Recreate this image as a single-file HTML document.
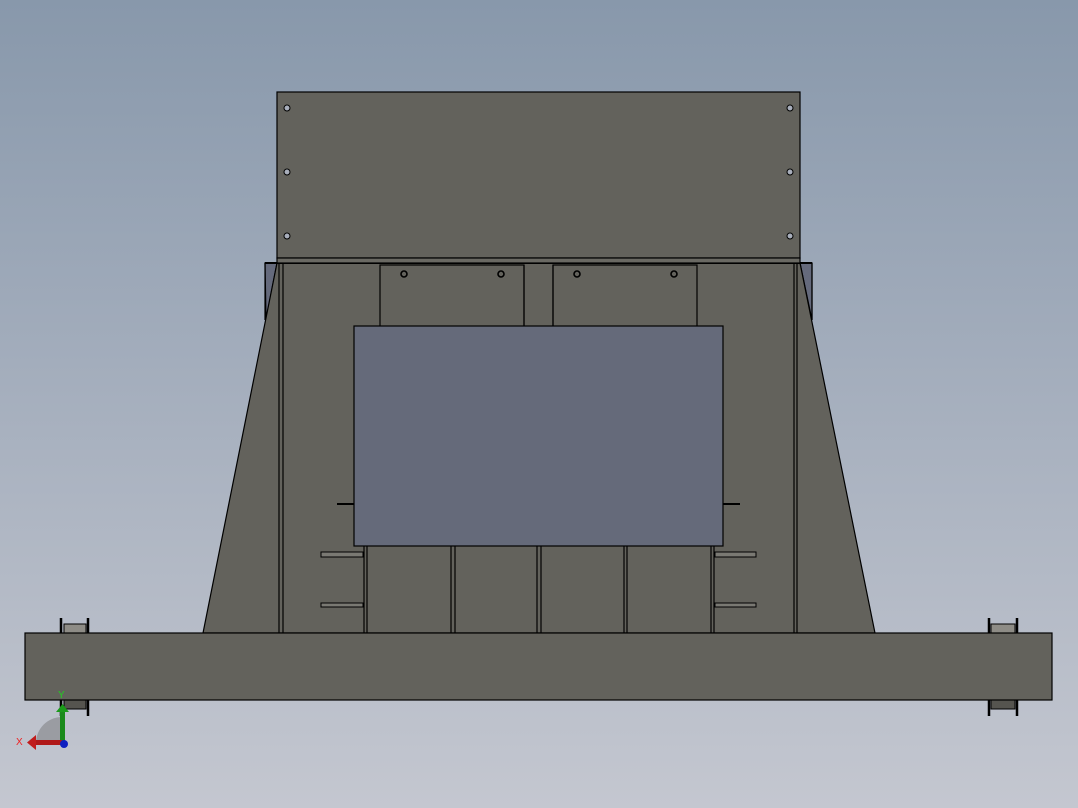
<!DOCTYPE html>
<html><head><meta charset="utf-8"><style>
html,body{margin:0;padding:0;width:1078px;height:808px;overflow:hidden}
body{background:linear-gradient(#8898ab 0%,#a3adbc 45%,#c4c7d0 100%)}
svg{display:block}
</style></head><body>
<svg width="1078" height="808" viewBox="0 0 1078 808" xmlns="http://www.w3.org/2000/svg" font-family="Liberation Sans, sans-serif">
<g stroke="#000" stroke-width="1.2">
<!-- small blue corner rects -->
<polygon points="265,263 277,263 266,320" fill="#656a7c"/>
<polygon points="800,263 812,263 812,320" fill="#656a7c"/>
<!-- body trapezoid -->
<polygon points="277,263 800,263 875,633 203,633" fill="#63625c"/>
<line x1="265" y1="263" x2="265" y2="320"/>
<line x1="812" y1="263" x2="812" y2="320"/>
<line x1="265" y1="263" x2="812" y2="263" stroke-width="2"/>
<line x1="279" y1="263" x2="279" y2="633"/><line x1="283" y1="263" x2="283" y2="633"/>
<line x1="794" y1="263" x2="794" y2="633"/><line x1="797" y1="263" x2="797" y2="633"/>
<!-- top plate -->
<rect x="277" y="92" width="523" height="166" fill="#63625c"/>
<rect x="277" y="258" width="523" height="5" fill="#6a6963"/>
<!-- plates -->
<rect x="380" y="265" width="144" height="62" fill="#63625c"/>
<rect x="553" y="265" width="144" height="62" fill="#63625c"/>
<line x1="524" y1="265" x2="524" y2="326"/><line x1="553" y1="265" x2="553" y2="326"/>
<!-- lower verticals -->
<g fill="none">
<line x1="364" y1="546" x2="364" y2="633"/><line x1="367" y1="546" x2="367" y2="633"/>
<line x1="451" y1="546" x2="451" y2="633"/><line x1="455" y1="546" x2="455" y2="633"/>
<line x1="537" y1="546" x2="537" y2="633"/><line x1="541" y1="546" x2="541" y2="633"/>
<line x1="624" y1="546" x2="624" y2="633"/><line x1="627" y1="546" x2="627" y2="633"/>
<line x1="711" y1="546" x2="711" y2="633"/><line x1="714" y1="546" x2="714" y2="633"/>
</g>
<g fill="#7a7973" stroke-width="1">
<rect x="321" y="552" width="42" height="5"/><rect x="321" y="603" width="42" height="4"/>
<rect x="715" y="552" width="41" height="5"/><rect x="715" y="603" width="41" height="4"/>
</g>
<line x1="337" y1="504" x2="354" y2="504" stroke-width="2"/>
<line x1="723" y1="504" x2="740" y2="504" stroke-width="2"/>
<!-- blue rect -->
<rect x="354" y="326" width="369" height="220" fill="#656a7a"/>
<!-- holes -->
<g fill="#a8aebb" stroke-width="1">
<circle cx="287" cy="108" r="3"/><circle cx="287" cy="172" r="3"/><circle cx="287" cy="236" r="3"/>
<circle cx="790" cy="108" r="3"/><circle cx="790" cy="172" r="3"/><circle cx="790" cy="236" r="3"/>
</g>
<g fill="none" stroke-width="1.6">
<circle cx="404" cy="274" r="3"/><circle cx="501" cy="274" r="3"/>
<circle cx="577" cy="274" r="3"/><circle cx="674" cy="274" r="3"/>
</g>
<!-- wheels -->
<g fill="#8e8c86" stroke-width="1">
<rect x="64" y="624" width="22" height="9"/><rect x="64" y="700" width="22" height="9" fill="#55544f"/>
<rect x="991" y="624" width="24" height="9"/><rect x="991" y="700" width="24" height="9" fill="#55544f"/>
</g>
<g stroke-width="2.5">
<line x1="61" y1="618" x2="61" y2="633"/><line x1="88" y1="618" x2="88" y2="633"/>
<line x1="61" y1="700" x2="61" y2="716"/><line x1="88" y1="700" x2="88" y2="716"/>
<line x1="989" y1="618" x2="989" y2="633"/><line x1="1017" y1="618" x2="1017" y2="633"/>
<line x1="989" y1="700" x2="989" y2="716"/><line x1="1017" y1="700" x2="1017" y2="716"/>
</g>
<!-- base beam -->
<rect x="25" y="633" width="1027" height="67" fill="#63625c"/>
</g>
<!-- triad -->
<path d="M62,717 A26,26 0 0 0 36,743 L62,743 Z" fill="#9a9ca2"/>
<rect x="60" y="710" width="5" height="33" fill="#1a8a1a"/>
<polygon points="56,712 62.5,704 69,712" fill="#1a9a1a"/>
<rect x="35" y="740" width="27" height="5" fill="#b01818"/>
<polygon points="36,735 27,742.5 36,750" fill="#c01c1c"/>
<circle cx="64" cy="744" r="4" fill="#1020c0"/>
<text x="58" y="698" font-size="10" fill="#2c2">Y</text>
<text x="16" y="745" font-size="10" fill="#e22">X</text>
</svg>
</body></html>
